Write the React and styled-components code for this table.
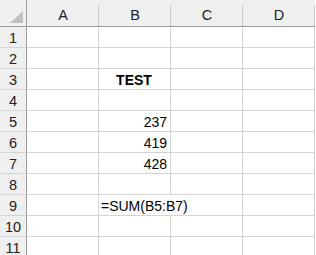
import React from 'react'
import styled, { createGlobalStyle } from 'styled-components'

const columns = ['A', 'B', 'C', 'D']

const cells = {
  'B3': { text: 'TEST', align: 'center', bold: true },
  'B5': { text: '237', align: 'right' },
  'B6': { text: '419', align: 'right' },
  'B7': { text: '428', align: 'right' },
  'B9': { text: '=SUM(B5:B7)', align: 'left', overflow: true },
}

function App() {
  const rows = Array.from({ length: 11 }, (_, i) => i + 1)

  return (
    <>
      <GlobalStyle />
      <Sheet>
        <Corner>
          <Triangle />
        </Corner>
        {columns.map((col) => (
          <ColHeader key={col}>{col}</ColHeader>
        ))}
        {rows.map((row) => (
          <React.Fragment key={row}>
            <RowHeader>{row}</RowHeader>
            {columns.map((col) => {
              const cell = cells[col + row]
              return (
                <Cell key={col} $align={cell?.align} $bold={cell?.bold} $overflow={cell?.overflow}>
                  {cell?.text}
                </Cell>
              )
            })}
          </React.Fragment>
        ))}
      </Sheet>
    </>
  )
}

export default App

const GlobalStyle = createGlobalStyle`
  html, body {
    margin: 0;
    padding: 0;
    background: #ffffff;
    overflow: hidden;
  }
  body {
    font-family: "Liberation Sans", Arial, sans-serif;
  }
`

const Sheet = styled.div`
  display: grid;
  grid-template-columns: 27px repeat(4, 72px);
  grid-template-rows: 27px;
  grid-auto-rows: 21px;
  width: 316px;
  height: 255px;
  overflow: hidden;
`

const Corner = styled.div`
  position: relative;
  background: #efefef;
  border-right: 1px solid #9b9b9b;
  border-bottom: 1px solid #9b9b9b;
`

const Triangle = styled.div`
  position: absolute;
  right: 3px;
  bottom: 3px;
  width: 13px;
  height: 12px;
  background: #c0c0c0;
  clip-path: polygon(100% 0, 100% 100%, 0 100%);
`

const ColHeader = styled.div`
  display: flex;
  align-items: flex-end;
  justify-content: center;
  padding-bottom: 3px;
  box-sizing: border-box;
  background:
    linear-gradient(#c8c8c8, #c8c8c8) right 6px / 1px calc(100% - 6px) no-repeat,
    #efefef;
  border-bottom: 1px solid #9b9b9b;
  font-size: 14.5px;
  color: #222222;
`

const RowHeader = styled.div`
  display: flex;
  align-items: flex-end;
  justify-content: center;
  padding-bottom: 1px;
  box-sizing: border-box;
  background: #efefef;
  border-right: 1px solid #9b9b9b;
  border-bottom: 1px solid #d4d4d4;
  font-size: 14.5px;
  color: #222222;
`

const Cell = styled.div`
  display: flex;
  align-items: flex-end;
  justify-content: ${(p) => p.$align === 'right' ? 'flex-end' : p.$align === 'center' ? 'center' : 'flex-start'};
  padding: 0 3px 1px 2px;
  box-sizing: border-box;
  border-right: 1px solid #d4d4d4;
  border-bottom: 1px solid #d4d4d4;
  font-size: 14px;
  font-weight: ${(p) => p.$bold ? 700 : 400};
  color: #000000;
  white-space: nowrap;
  overflow: ${(p) => p.$overflow ? 'visible' : 'hidden'};
  position: relative;
  z-index: ${(p) => p.$overflow ? 1 : 0};
  ${(p) => p.$overflow && 'border-right-color: transparent;'}
`
